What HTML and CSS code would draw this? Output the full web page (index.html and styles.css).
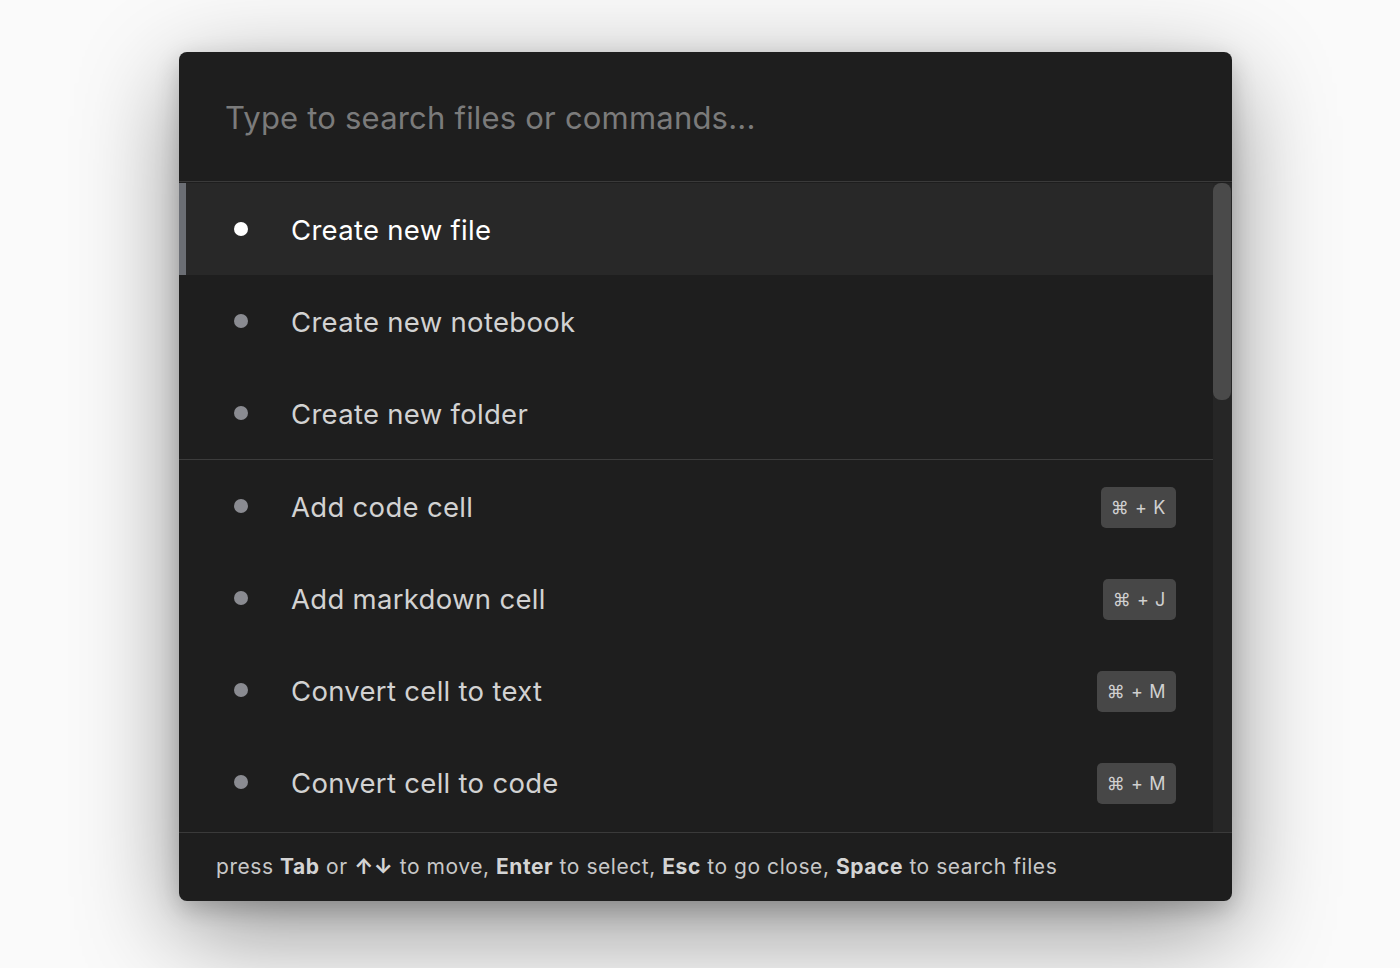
FILE: index.html
```html
<!DOCTYPE html>
<html lang="en">
<head>
<meta charset="utf-8">
<title>Command palette</title>
<link rel="stylesheet" href="styles.css">
</head>
<body>
<div class="palette">
  <div class="search">
    <input class="search-input" type="text" placeholder="Type to search files or commands...">
  </div>
  <div class="list-wrap">
    <div class="list">
      <div class="group">
        <div class="row selected"><span class="dot"></span><span class="label">Create new file</span></div>
        <div class="row"><span class="dot"></span><span class="label">Create new notebook</span></div>
        <div class="row"><span class="dot"></span><span class="label">Create new folder</span></div>
      </div>
      <div class="group">
        <div class="row"><span class="dot"></span><span class="label">Add code cell</span><span class="kbd">⌘ + K</span></div>
        <div class="row"><span class="dot"></span><span class="label">Add markdown cell</span><span class="kbd">⌘ + J</span></div>
        <div class="row"><span class="dot"></span><span class="label">Convert cell to text</span><span class="kbd">⌘ + M</span></div>
        <div class="row"><span class="dot"></span><span class="label">Convert cell to code</span><span class="kbd">⌘ + M</span></div>
      </div>
    </div>
    <div class="scrollbar"><div class="thumb"></div></div>
  </div>
  <div class="footer">
    <p class="hint">press <b>Tab</b> or <b>↑↓</b> to move, <b>Enter</b> to select, <b>Esc</b> to go close, <b>Space</b> to search files</p>
  </div>
</div>
</body>
</html>
```

FILE: styles.css
```css
* { box-sizing: border-box; }
html, body { margin: 0; padding: 0; }
body {
  background: #fafafa;
  font-family: Inter, "Noto Sans", sans-serif;
  width: 1400px;
  height: 968px;
  overflow: hidden;
  padding: 52px 0 0 179px;
}
.palette {
  width: 1053px;
  height: 849px;
  background: #1e1e1e;
  border-radius: 8px;
  box-shadow: 0 30px 100px rgba(0,0,0,0.42), 0 8px 24px rgba(0,0,0,0.2);
  display: flex;
  flex-direction: column;
  overflow: hidden;
}
.search {
  height: 130px;
  border-bottom: 1px solid #3a3a3a;
  display: flex;
  align-items: center;
  padding: 0 0 0 46px;
  flex: none;
}
.search-input {
  background: transparent;
  border: none;
  outline: none;
  width: 100%;
  font-family: inherit;
  font-size: 31px;
  letter-spacing: 0.2px;
  color: #e0e0e0;
  padding: 0;
  margin-top: 2px;
}
.search-input::placeholder { color: #7b7b7b; }
.list-wrap {
  height: 651px;
  flex: none;
  display: flex;
  padding-top: 1px;
  border-bottom: 1px solid #3a3a3a;
}
.list {
  flex: 1;
  overflow: hidden;
}
.group + .group { border-top: 1px solid #3c3c3c; }
.row {
  height: 92px;
  display: flex;
  align-items: center;
  padding: 0 37px 0 55px;
}
.row.selected {
  background: #282828;
  box-shadow: inset 7px 0 0 #6b6e74;
}
.dot {
  width: 14px;
  height: 14px;
  border-radius: 50%;
  background: #8a8b91;
  flex: none;
}
.selected .dot { background: #ffffff; }
.label {
  margin-left: 43px;
  font-size: 27.5px;
  color: #d2d2d2;
  flex: 1;
  letter-spacing: 0.3px;
  margin-top: 2px;
}
.selected .label { color: #ffffff; }
.kbd {
  background: #474747;
  color: #d0d0d0;
  font-size: 18px;
  height: 41px;
  padding: 0 10px;
  border-radius: 5px;
  display: flex;
  align-items: center;
  letter-spacing: 0.6px;
  margin-top: 2px;
}
.scrollbar {
  width: 19px;
  flex: none;
  background: #262626;
  padding: 0 1px 0 0;
}
.thumb {
  height: 217px;
  background: #4a4a4a;
  border-radius: 8px;
}
.footer {
  flex: 1;
  display: flex;
  align-items: center;
  padding: 0 0 0 37px;
}
.hint {
  margin: 0;
  font-size: 21px;
  line-height: 24px;
  color: #c8c8c8;
  letter-spacing: 0.55px;
  white-space: nowrap;
}
.hint b { color: #d4d4d4; font-weight: 700; }
```
